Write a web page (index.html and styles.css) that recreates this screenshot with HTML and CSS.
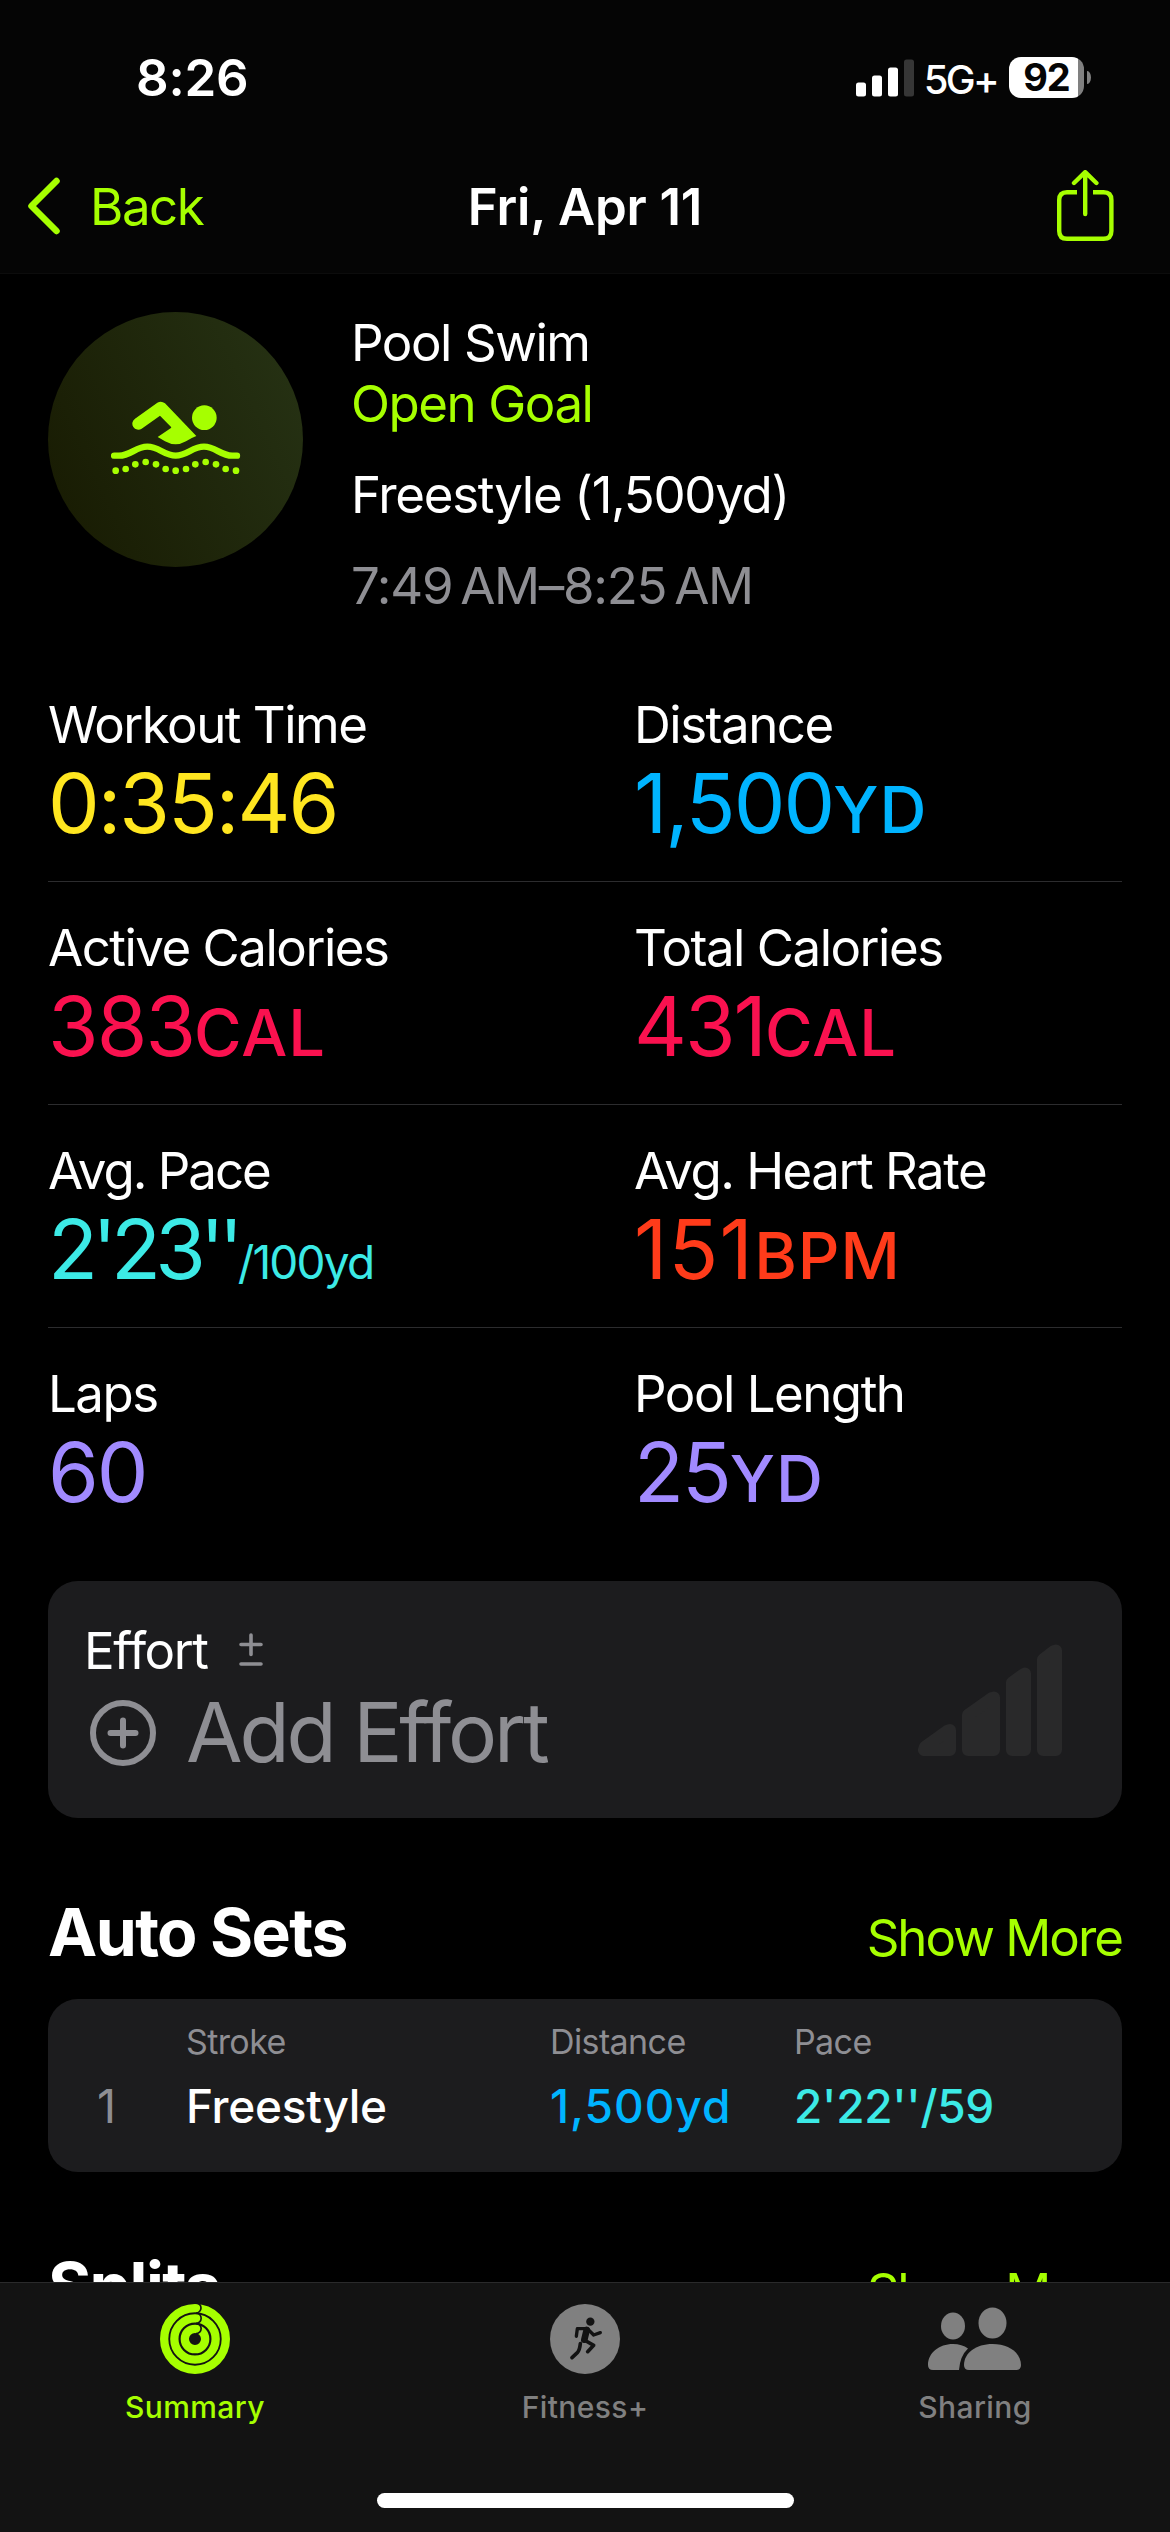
FILE: index.html
```html
<!DOCTYPE html>
<html lang="en">
<head>
    <meta charset="UTF-8">
    <meta name="viewport" content="width=device-width, initial-scale=1.0">
    <title>Workout Summary</title>
    <link rel="stylesheet" href="styles.css">
</head>
<body>
    <header>
        <div class="status-bar">
            <span class="clock">8:26</span>
            <div class="status-icons">
                <svg width="58" height="38" viewBox="0 0 58 38" fill="#fff">
                    <rect x="0" y="23.5" width="10" height="14" rx="2.5"/>
                    <rect x="16" y="16.5" width="10" height="21" rx="2.5"/>
                    <rect x="32" y="8.5" width="10" height="29" rx="2.5"/>
                    <rect x="48" y="0.5" width="10" height="37" rx="2.5" fill="#363636"/>
                </svg>
                <span class="network">5G+</span>
                <div class="battery">92</div>
                <div class="battery-tip"></div>
            </div>
        </div>
        <nav class="nav-bar">
            <a class="back" href="#">
                <svg width="34" height="58" viewBox="0 0 34 58" fill="none" stroke="currentColor" stroke-width="6.5" stroke-linecap="round" stroke-linejoin="round">
                    <path d="M29.5 4 L4.5 29 L29.5 54"/>
                </svg>
                <span>Back</span>
            </a>
            <h1>Fri, Apr 11</h1>
            <a class="share" href="#">
                <svg width="58" height="72" viewBox="0 0 58 72" fill="none" stroke="currentColor" stroke-width="4.4" stroke-linecap="round" stroke-linejoin="round">
                    <path stroke-linecap="butt" d="M20 22.2 H10 Q2.2 22.2 2.2 30 V61 Q2.2 68.8 10 68.8 H46.6 Q54.4 68.8 54.4 61 V30 Q54.4 22.2 46.6 22.2 H36"/>
                    <path d="M28.2 44 V2.5 M17 13 L28.2 2.2 L39.4 13"/>
                </svg>
            </a>
        </nav>
    </header>

    <main>
        <section class="workout">
            <div class="workout-icon">
                <svg width="130" height="74" viewBox="60 60 390 222" fill="#a6ff00">
                    <circle cx="340" cy="110" r="37"/>
                    <path d="M132 113 L199 65 Q211 58 222 67 L316 165 Q298 172 285 181 Q254 199 222 181 Q210 173 200 168 L241 140 Q239 136 235 133 L207 104 L152 143 A18 18 0 0 1 132 113 Z"/>
                    <path d="M69 224 H84 C120 224 134 197 169 197 S220 224 254 224 S304 197 339 197 S388 224 424 224 H438" fill="none" stroke="#a6ff00" stroke-width="19" stroke-linecap="round"/>
                    <circle cx="74" cy="269" r="10"/>
                    <circle cx="104" cy="264" r="10"/>
                    <circle cx="133" cy="250" r="10"/>
                    <circle cx="164" cy="243" r="10"/>
                    <circle cx="195" cy="250" r="10"/>
                    <circle cx="224" cy="264" r="10"/>
                    <circle cx="254" cy="269" r="10"/>
                    <circle cx="285" cy="264" r="10"/>
                    <circle cx="313" cy="250" r="10"/>
                    <circle cx="344" cy="243" r="10"/>
                    <circle cx="375" cy="250" r="10"/>
                    <circle cx="404" cy="264" r="10"/>
                    <circle cx="435" cy="269" r="10"/>
                </svg>
            </div>
            <div class="workout-info">
                <p>Pool Swim</p>
                <p class="goal">Open Goal</p>
                <p class="stroke">Freestyle (1,500yd)</p>
                <p class="time">7:49&#8239;AM–8:25&#8239;AM</p>
            </div>
        </section>

        <section class="stats">
            <div class="stat-row">
                <div class="stat">
                    <div class="label">Workout Time</div>
                    <div class="value yellow">0:35:46</div>
                </div>
                <div class="stat">
                    <div class="label">Distance</div>
                    <div class="value blue">1,500<span class="unit">YD</span></div>
                </div>
            </div>
            <div class="stat-row">
                <div class="stat">
                    <div class="label">Active Calories</div>
                    <div class="value pink">383<span class="unit">CAL</span></div>
                </div>
                <div class="stat">
                    <div class="label">Total Calories</div>
                    <div class="value pink">431<span class="unit">CAL</span></div>
                </div>
            </div>
            <div class="stat-row">
                <div class="stat">
                    <div class="label tight">Avg. Pace</div>
                    <div class="value cyan pace">2'23''<span class="per">/100yd</span></div>
                </div>
                <div class="stat">
                    <div class="label">Avg. Heart Rate</div>
                    <div class="value red heart">151<span class="unit">BPM</span></div>
                </div>
            </div>
            <div class="stat-row">
                <div class="stat">
                    <div class="label">Laps</div>
                    <div class="value purple">60</div>
                </div>
                <div class="stat">
                    <div class="label">Pool Length</div>
                    <div class="value purple">25<span class="unit">YD</span></div>
                </div>
            </div>
        </section>

        <section class="card effort">
            <div>
                <div class="effort-title">
                    <span>Effort</span>
                    <svg width="24" height="34" viewBox="0 0 24 34" fill="none" stroke="#8e8e93" stroke-width="3.6" stroke-linecap="round">
                        <path d="M2 11.5 H22 M12 2 V21.5 M2 31 H22"/>
                    </svg>
                </div>
                <div class="add-effort">
                    <svg width="66" height="66" viewBox="0 0 66 66" fill="none" stroke="#8e8e93" stroke-width="6" stroke-linecap="round">
                        <circle cx="33" cy="33" r="30"/>
                        <path d="M20.5 33 H45.5 M33 20.5 V45.5"/>
                    </svg>
                    <span>Add Effort</span>
                </div>
            </div>
            <svg width="144" height="112" viewBox="0 0 144 112" fill="#29292a" stroke="#29292a" stroke-width="12" stroke-linejoin="round">
                <path d="M6 106 H32 V86 L30 86.5 L7 103 Z"/>
                <path d="M50 106 H76 V53.5 L74 54 L50 71 Z"/>
                <path d="M94 106 H107 V29.5 L105 30.5 L94 38.5 Z"/>
                <path d="M125 106 H138 V6.5 L136 7 L125 15.5 Z"/>
            </svg>
        </section>

        <div class="section-head">
            <h2>Auto Sets</h2>
            <a href="#">Show More</a>
        </div>
        <section class="card sets">
            <span></span>
            <span class="col">Stroke</span>
            <span class="col">Distance</span>
            <span class="col">Pace</span>
            <span class="index">1</span>
            <span class="cell">Freestyle</span>
            <span class="cell blue wide">1,500yd</span>
            <span class="cell cyan">2'22''/59</span>
        </section>

        <div class="section-head">
            <h2>Splits</h2>
            <a href="#">Show More</a>
        </div>
    </main>

    <footer>
        <div class="tabs">
            <a class="tab active" href="#">
                <svg width="70" height="70" viewBox="-105 -105 210 210" fill="none" stroke="#a6ff00" stroke-width="25">
                    <circle r="92.5"/>
                    <circle r="62"/>
                    <circle r="30.5"/>
                    <!-- overlap of each ring's rounded end -->
                    <path d="M3 -108 A15 15 0 0 1 3 -78 A15 15 0 0 1 3 -47 A15 15 0 0 1 3 -16" stroke="#131313" stroke-width="5"/>
                </svg>
                <span>Summary</span>
            </a>
            <a class="tab" href="#">
                <svg width="70" height="70" viewBox="0 0 210 210" fill="none" stroke="#131313" stroke-width="10" stroke-linecap="round" stroke-linejoin="round">
                    <circle cx="105" cy="105" r="105" fill="#808080" stroke="none"/>
                    <circle cx="121" cy="53" r="12.5" fill="#131313" stroke="none"/>
                    <path d="M79 97 L82 74 H112 L131 93 L151 86"/>
                    <path d="M110 78 L103 107" stroke-width="20"/>
                    <path d="M103 108 L131 124 L113 143" stroke-width="11"/>
                    <path d="M91 119 Q89 139 82 146 L66 161" stroke-width="11"/>
                </svg>
                <span>Fitness+</span>
            </a>
            <a class="tab" href="#">
                <svg width="94" height="70" viewBox="0 0 94 70" fill="#808080">
                    <ellipse cx="25" cy="22" rx="12" ry="13.5"/>
                    <ellipse cx="64.5" cy="19" rx="14" ry="15.5"/>
                    <path d="M40 44.5 Q32 52 31 66 H5 Q0 66 0 61 C0 49 11 40 25 40 Q34 40 40 44.5 Z"/>
                    <path d="M41 66 Q36 66 36 61 C36 49 48 40 64.5 40 S93 49 93 61 Q93 66 88 66 Z"/>
                </svg>
                <span>Sharing</span>
            </a>
        </div>
        <div class="home-indicator"></div>
    </footer>
</body>
</html>
```
FILE: styles.css
```css
* {
    box-sizing: border-box;
    margin: 0;
    padding: 0;
}
body {
    width: 1170px;
    height: 2532px;
    overflow: hidden;
    display: flex;
    flex-direction: column;
    background-color: #000;
    color: #fff;
    font-family: Inter, "Liberation Sans", sans-serif;
    font-size: 51px;
    line-height: 61px;
    letter-spacing: -1.45px;
}
a {
    color: #a6ff00;
    text-decoration: none;
}
svg {
    display: block;
    flex: none;
}

/* Header */
header {
    height: 274px;
    background-color: #050505;
    border-bottom: 1px solid #0c0c0c;
}
.status-bar {
    height: 155px;
    padding: 0 79px 0 136px;
    display: flex;
    justify-content: space-between;
    align-items: center;
}
.clock {
    font-weight: 600;
    letter-spacing: -0.2px;
}
.status-icons {
    display: flex;
    align-items: center;
}
.network {
    font-size: 40px;
    font-weight: 500;
    letter-spacing: -2.7px;
    margin: 3px 12px 0 10px;
}
.battery {
    width: 75px;
    height: 41px;
    border-radius: 12px;
    background: linear-gradient(to right, #fff 92%, #808080 92%);
    color: #050505;
    font-size: 38px;
    font-weight: 700;
    line-height: 41px;
    letter-spacing: -1px;
    text-align: center;
}
.battery-tip {
    width: 4px;
    height: 13px;
    margin-left: 3px;
    border-radius: 0 4px 4px 0 / 0 7px 7px 0;
    background-color: #808080;
}
.nav-bar {
    height: 102px;
    display: grid;
    grid-template-columns: 1fr auto 1fr;
    align-items: center;
}
.back, .share {
    display: flex;
    align-items: center;
}
.back {
    gap: 29px;
    padding-left: 27px;
}
.share {
    justify-content: flex-end;
    padding-right: 55px;
}
h1 {
    font-size: 51px;
    font-weight: 600;
    letter-spacing: -0.15px;
}

/* Workout */
main {
    flex: 1;
    min-height: 0;
    overflow: hidden;
    padding: 38px 48px 0;
}
.workout {
    display: flex;
    gap: 48px;
    height: 347px;
}
.workout-icon {
    width: 255px;
    height: 255px;
    border-radius: 50%;
    background: linear-gradient(65deg, #181b02 5%, #263214 95%);
    display: flex;
    justify-content: center;
    align-items: center;
    padding-bottom: 4px;
}
.goal {
    color: #a6ff00;
}
.stroke, .time {
    margin-top: 30px;
}
.stroke {
    letter-spacing: -1.3px;
}
.time {
    color: #8e8e93;
    letter-spacing: -1.3px;
}

/* Stats */
.stat-row {
    display: grid;
    grid-template-columns: 586px 1fr;
    height: 223px;
    padding-top: 35px;
    border-bottom: 1px solid #2c2c2e;
}
.stat-row:last-child {
    border-bottom: none;
}
.label {
    letter-spacing: -1.5px;
}
.tight {
    letter-spacing: -2px;
}
.value {
    padding-top: 2px;
    font-size: 82px;
    line-height: 94px;
    letter-spacing: -2px;
    white-space: nowrap;
}
.unit {
    font-size: 65px;
    line-height: 1;
    font-weight: 500;
    letter-spacing: 1px;
}
.per {
    font-size: 46px;
    line-height: 1;
    letter-spacing: -1.8px;
}
.pace {
    letter-spacing: -5.8px;
}
.heart {
    letter-spacing: 1.2px;
}
.yellow { color: #ffe620; }
.blue { color: #00b4ff; }
.pink { color: #fa114f; }
.cyan { color: #3ceae6; }
.red { color: #ff3b1a; }
.purple { color: #a18aff; }

/* Cards */
.card {
    background-color: #1c1c1e;
    border-radius: 30px;
}
.effort {
    margin-top: 30px;
    height: 237px;
    padding: 0 60px 0 36px;
    display: flex;
    justify-content: space-between;
    align-items: center;
}
.effort-title, .add-effort {
    display: flex;
    align-items: center;
}
.effort-title {
    gap: 32px;
    margin-bottom: 5px;
}
.add-effort {
    gap: 30px;
    padding-left: 6px;
    color: #8e8e93;
    font-size: 82px;
    line-height: 94px;
    letter-spacing: -3.2px;
}
.section-head {
    display: flex;
    justify-content: space-between;
    align-items: baseline;
    margin: 75px 0 27px;
    height: 79px;
    line-height: 79px;
}
.section-head a {
    letter-spacing: -2px;
}
h2 {
    font-size: 66px;
    font-weight: 700;
    letter-spacing: -1.6px;
}
.sets {
    height: 173px;
    padding: 21px 0 0 49px;
    display: grid;
    grid-template-columns: 89px 364px 244px 1fr;
    grid-template-rows: 44px 60px;
    row-gap: 12px;
}
.col {
    color: #8e8e93;
    font-size: 34px;
    line-height: 44px;
    letter-spacing: -0.6px;
}
.index {
    color: #8e8e93;
    font-size: 47px;
    line-height: 60px;
}
.cell {
    font-size: 46px;
    font-weight: 500;
    line-height: 60px;
    letter-spacing: -0.3px;
}
.wide {
    letter-spacing: 1px;
}

/* Tab bar */
footer {
    height: 250px;
    background-color: #131313;
    border-top: 1px solid #2a2a2b;
    padding: 21px 0 24px;
    display: flex;
    flex-direction: column;
    justify-content: space-between;
    align-items: center;
}
.tabs {
    display: grid;
    grid-template-columns: repeat(3, 1fr);
    width: 100%;
}
.tab {
    display: flex;
    flex-direction: column;
    align-items: center;
    gap: 15px;
    color: #808080;
    font-size: 30px;
    font-weight: 500;
    line-height: 36px;
    letter-spacing: 0.4px;
}
.active {
    color: #a6ff00;
}
.home-indicator {
    width: 417px;
    height: 15px;
    border-radius: 8px;
    background-color: #fff;
}
```
